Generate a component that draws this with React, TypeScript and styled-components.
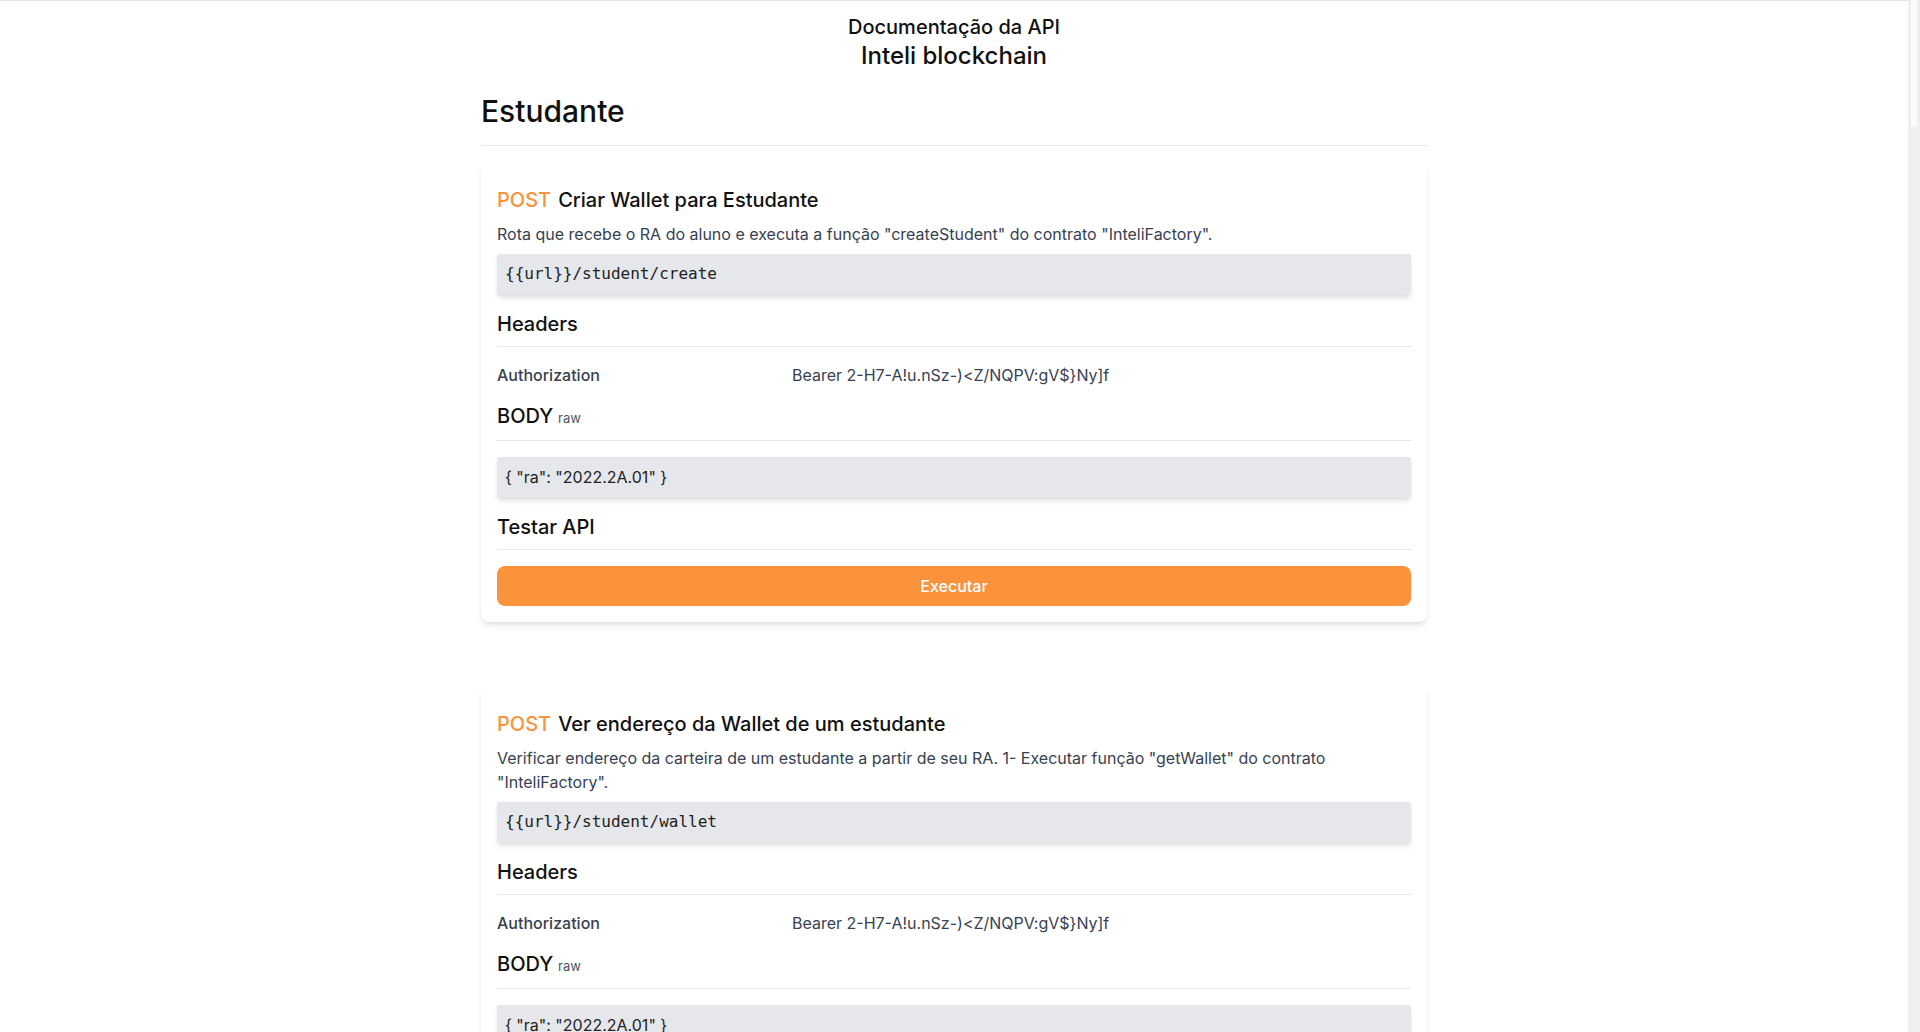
import React from "react";
import styled, { createGlobalStyle } from "styled-components";

const GlobalStyle = createGlobalStyle`
  html, body {
    margin: 0;
    padding: 0;
    background: #ffffff;
  }
  body {
    font-family: Inter, "Noto Sans", "Liberation Sans", sans-serif;
    color: #111111;
    border-top: 1px solid #e5e5e5;
    padding-right: 12px;
  }
`;

const ScrollTrack = styled.div`
  position: fixed;
  top: 0;
  right: 0;
  width: 12px;
  height: 100vh;
  background: #efefef;
  z-index: 10;
`;

const ScrollThumb = styled.div`
  position: absolute;
  top: 0;
  left: 3px;
  width: 6px;
  height: 127px;
  border-radius: 0 0 3px 3px;
  background: #fbfbfb;
`;

const Page = styled.div`
  width: 946px;
  margin: 0 auto;
  padding-bottom: 64px;
`;

const TopHeader = styled.header`
  display: flex;
  flex-direction: column;
  align-items: center;
  padding-top: 12px;
`;

const DocTitle = styled.div`
  font-size: 20px;
  line-height: 28px;
  font-weight: 500;
  color: #111;
`;

const ProjectTitle = styled.div`
  font-size: 24px;
  line-height: 30px;
  font-weight: 500;
  color: #111;
`;

const SectionTitle = styled.h1`
  margin: 22px 0 0;
  font-size: 30px;
  line-height: 36px;
  font-weight: 500;
  color: #111;
  padding-bottom: 16px;
  border-bottom: 1px solid #e5e7eb;
`;

const CardList = styled.div`
  display: flex;
  flex-direction: column;
  gap: 64px;
  margin-top: 16px;
`;

const Card = styled.section`
  background: #fff;
  border-radius: 8px;
  box-shadow: 0 4px 6px -1px rgba(0, 0, 0, 0.1), 0 2px 4px -2px rgba(0, 0, 0, 0.1);
  padding: 24px 16px 16px;
  display: flex;
  flex-direction: column;
`;

const EndpointTitle = styled.h2`
  margin: 0;
  font-size: 20px;
  line-height: 28px;
  font-weight: 500;
  color: #111;
`;

const Method = styled.span`
  color: #fb923c;
  margin-right: 7px;
`;

const Description = styled.p`
  margin: 8px 0 0;
  font-size: 16px;
  line-height: 24px;
  color: #374151;
`;

const CodeBox = styled.div<{ $mono?: boolean; $flush?: boolean }>`
  margin-top: ${(p) => (p.$flush ? "16px" : "8px")};
  background: #e5e7eb;
  border-radius: 2px;
  box-shadow: 0 4px 6px -1px rgba(0, 0, 0, 0.1), 0 2px 4px -2px rgba(0, 0, 0, 0.1);
  padding: 8px 8px 9px;
  font-family: ${(p) =>
    p.$mono ? '"DejaVu Sans Mono", "Liberation Mono", monospace' : 'Inter, "Noto Sans", sans-serif'};
  font-size: ${(p) => (p.$mono ? "16px" : "16px")};
  line-height: 24px;
  color: #222;
`;

const SubHeading = styled.h3`
  margin: 15px 0 0;
  padding-bottom: 8px;
  border-bottom: 1px solid #e5e7eb;
  font-size: 20px;
  line-height: 28px;
  font-weight: 500;
  color: #111;
`;

const Small = styled.span`
  font-size: 13px;
  font-weight: 400;
  color: #4b5563;
  margin-left: 5px;
`;

const HeaderRow = styled.div`
  display: flex;
  margin-top: 16px;
  font-size: 16px;
  line-height: 24px;
`;

const HeaderKey = styled.div`
  width: 295px;
  flex-shrink: 0;
  font-weight: 500;
  color: #374151;
`;

const HeaderValue = styled.div`
  color: #374151;
`;

const ExecuteButton = styled.button`
  margin-top: 16px;
  height: 40px;
  width: 100%;
  border: none;
  border-radius: 8px;
  background: #fb923c;
  color: #fff;
  font-family: Inter, "Noto Sans", sans-serif;
  font-size: 16px;
  font-weight: 500;
  cursor: pointer;
`;

type Endpoint = {
  method: string;
  title: string;
  description: string;
  url: string;
  body: string;
};

const TOKEN = "Bearer 2-H7-A!u.nSz-)<Z/NQPV:gV$}Ny]f";

const endpoints: Endpoint[] = [
  {
    method: "POST",
    title: "Criar Wallet para Estudante",
    description:
      'Rota que recebe o RA do aluno e executa a função "createStudent" do contrato "InteliFactory".',
    url: "{{url}}/student/create",
    body: '{ "ra": "2022.2A.01" }',
  },
  {
    method: "POST",
    title: "Ver endereço da Wallet de um estudante",
    description:
      'Verificar endereço da carteira de um estudante a partir de seu RA. 1- Executar função "getWallet" do contrato "InteliFactory".',
    url: "{{url}}/student/wallet",
    body: '{ "ra": "2022.2A.01" }',
  },
];

function EndpointCard({ ep }: { ep: Endpoint }) {
  return (
    <Card>
      <EndpointTitle>
        <Method>{ep.method}</Method>
        {ep.title}
      </EndpointTitle>
      <Description>{ep.description}</Description>
      <CodeBox $mono>{ep.url}</CodeBox>
      <SubHeading>Headers</SubHeading>
      <HeaderRow>
        <HeaderKey>Authorization</HeaderKey>
        <HeaderValue>{TOKEN}</HeaderValue>
      </HeaderRow>
      <SubHeading>
        BODY<Small>raw</Small>
      </SubHeading>
      <CodeBox $flush>{ep.body}</CodeBox>
      <SubHeading>Testar API</SubHeading>
      <ExecuteButton>Executar</ExecuteButton>
    </Card>
  );
}

export default function App() {
  return (
    <>
      <GlobalStyle />
      <ScrollTrack>
        <ScrollThumb />
      </ScrollTrack>
      <Page>
        <TopHeader>
          <DocTitle>Documentação da API</DocTitle>
          <ProjectTitle>Inteli blockchain</ProjectTitle>
        </TopHeader>
        <SectionTitle>Estudante</SectionTitle>
        <CardList>
          {endpoints.map((ep) => (
            <EndpointCard key={ep.url} ep={ep} />
          ))}
        </CardList>
      </Page>
    </>
  );
}
